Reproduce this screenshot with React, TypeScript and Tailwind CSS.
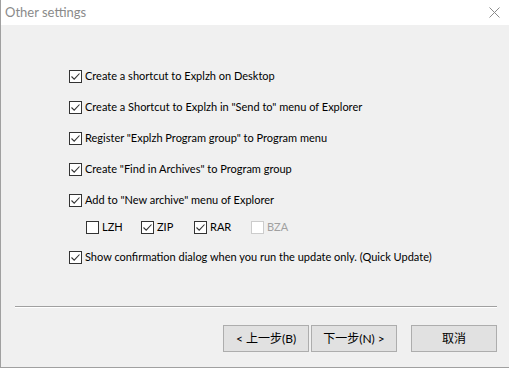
import React from "react";

function Box({ checked, disabled }: { checked: boolean; disabled?: boolean }) {
  return (
    <span
      className={
        "flex h-[13px] w-[13px] shrink-0 items-center justify-center border bg-white " +
        (disabled ? "border-[#cccccc]" : "border-[#333333]")
      }
    >
      {checked && (
        <svg width="11" height="11" viewBox="0 0 11 11">
          <path d="M1.5 5.5 L4.2 8.2 L9.5 2.5" fill="none" stroke="#333333" strokeWidth="1.1" />
        </svg>
      )}
    </span>
  );
}

function Row({ label, checked = true }: { label: string; checked?: boolean }) {
  return (
    <div className="flex h-[31px] items-center gap-[3px] pl-[68px]">
      <Box checked={checked} />
      <span className="text-[11px] text-black">{label}</span>
    </div>
  );
}

function Sub({ label, checked, disabled, w }: { label: string; checked: boolean; disabled?: boolean; w: string }) {
  return (
    <div className={"flex items-center gap-[3px] " + w}>
      <Box checked={checked} disabled={disabled} />
      <span className={"text-[11px] " + (disabled ? "text-[#a0a0a0]" : "text-black")}>{label}</span>
    </div>
  );
}

export default function App() {
  return (
    <div
      className="flex h-[368px] w-[509px] flex-col border-b border-l border-[#a0a0a0] bg-[#f0f0f0]"
      style={{ fontFamily: 'Lato, "Noto Sans CJK SC", sans-serif' }}
    >
      <div className="flex h-[25px] shrink-0 items-center justify-between bg-white pl-[4px] pr-[9px]">
        <span className="text-[13px] text-[#8a8a8a]">
          Other settings
        </span>
        <svg width="11" height="11" viewBox="0 0 11 11">
          <path d="M0.5 0.5 L10.5 10.5 M10.5 0.5 L0.5 10.5" stroke="#8a8a8a" strokeWidth="1" />
        </svg>
      </div>
      <div className="flex flex-col pt-[36px]">
        <Row label="Create a shortcut to Explzh on Desktop" />
        <Row label={'Create a Shortcut to Explzh in "Send to" menu of Explorer'} />
        <Row label={'Register "Explzh Program group" to Program menu'} />
        <Row label={'Create "Find in Archives" to Program group'} />
        <Row label={'Add to "New archive" menu of Explorer'} />
        <div className="flex h-[23px] items-center pl-[85px]">
          <Sub label="LZH" checked={false} w="w-[55px]" />
          <Sub label="ZIP" checked={true} w="w-[53px]" />
          <Sub label="RAR" checked={true} w="w-[57px]" />
          <Sub label="BZA" checked={false} disabled w="w-[50px]" />
        </div>
        <div className="flex h-[37px] items-center gap-[3px] pl-[68px]">
          <Box checked />
          <span className="text-[11px] text-black">
            Show confirmation dialog when you run the update only. (Quick Update)
          </span>
        </div>
      </div>
      <div className="ml-[14px] mr-[12px] mt-[30px] h-[2px] border-t border-b border-t-[#a0a0a0] border-b-white" />
      <div className="mt-[17px] flex pl-[222px]">
        <button className="flex h-[27px] w-[86px] items-center justify-center border border-[#adadad] bg-[#e1e1e1] text-[12px] text-black">
          &lt; 上一步(B)
        </button>
        <button className="ml-[2px] flex h-[27px] w-[86px] items-center justify-center border border-[#adadad] bg-[#e1e1e1] text-[12px] text-black">
          下一步(N) &gt;
        </button>
        <button className="ml-[14px] flex h-[27px] w-[86px] items-center justify-center border border-[#adadad] bg-[#e1e1e1] text-[12px] text-black">
          取消
        </button>
      </div>
    </div>
  );
}
